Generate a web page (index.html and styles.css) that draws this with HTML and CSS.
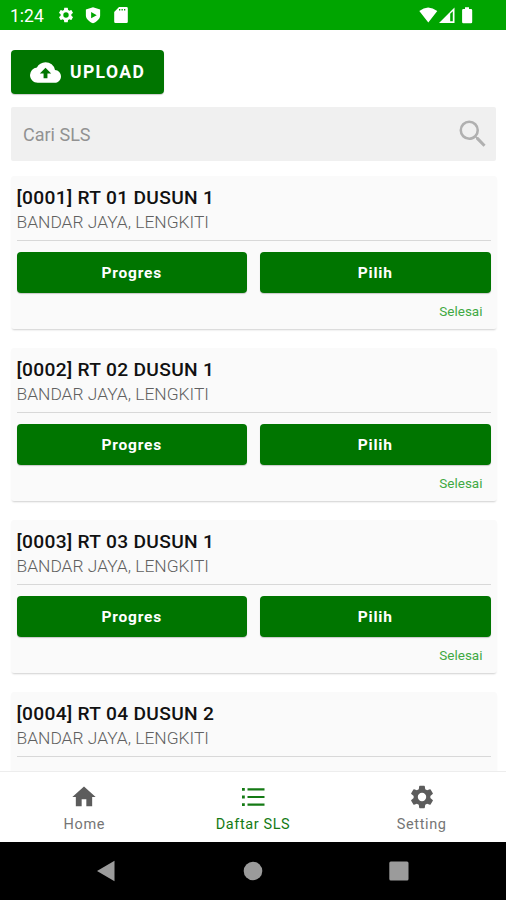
FILE: index.html
```html
<!DOCTYPE html>
<html lang="id">
<head>
<meta charset="utf-8">
<title>Daftar SLS</title>
<link rel="stylesheet" href="styles.css">
</head>
<body>
<svg class="defs" width="0" height="0">
  <symbol id="gear" viewBox="0 0 24 24"><path d="M19.14 12.94c.04-.3.06-.61.06-.94s-.02-.64-.07-.94l2.03-1.58a.49.49 0 0 0 .12-.61l-1.92-3.32a.49.49 0 0 0-.59-.22l-2.39.96a7 7 0 0 0-1.62-.94l-.36-2.54a.48.48 0 0 0-.48-.41h-3.84c-.24 0-.43.17-.47.41l-.36 2.54c-.59.24-1.13.57-1.62.94l-2.39-.96a.48.48 0 0 0-.59.22L2.74 8.87a.47.47 0 0 0 .12.61l2.03 1.58c-.05.3-.09.63-.09.94s.02.64.07.94l-2.03 1.58a.49.49 0 0 0-.12.61l1.92 3.32c.12.22.37.29.59.22l2.39-.96c.5.38 1.03.7 1.62.94l.36 2.54c.05.24.24.41.48.41h3.84c.24 0 .44-.17.47-.41l.36-2.54a7 7 0 0 0 1.62-.94l2.39.96c.22.08.47 0 .59-.22l1.92-3.32a.47.47 0 0 0-.12-.61zM12 15.6a3.6 3.6 0 1 1 0-7.2 3.6 3.6 0 0 1 0 7.2z"/></symbol>
</svg>
<header class="status">
  <span class="clock">1:24</span>
  <svg class="s-gear" width="18" height="18"><use href="#gear"/></svg>
  <svg class="s-shield" width="18" height="18" viewBox="0 0 24 24"><path fill-rule="evenodd" d="M12 1.500 2.500 4.500v8c0 4.600 4.500 8.200 9.500 10.500 5-2.300 9.500-5.900 9.500-10.500v-8zM9.500 8l7.500 4.200-7.500 4.200z"/></svg>
  <svg class="s-card" width="14" height="16" viewBox="0 0 14 16"><path fill-rule="evenodd" d="M5 0h7.500A1.300 1.300 0 0 1 13.800 1.300v13.400a1.300 1.300 0 0 1-1.300 1.300h-11A1.300 1.300 0 0 1 .2 14.700V5zM5 2v1.500h1.300V2zm2.500 0v1.500h1.300V2zM10 2v1.500h1.300V2z"/></svg>
  <svg class="s-signals" width="55" height="17" viewBox="0 0 55 17"><path fill-rule="evenodd" d="M.3 4Q9-3 18.300 4L9.300 15.500zM20 16 35.500.500V16zM31.200 6.800v7.500h2.600V4.200zM46 .300h4v1.700h2q1.200 0 1.200 1.200V15q0 1.200-1.200 1.200h-7.700q-1.200 0-1.200-1.200V3.200Q43.100 2 44.300 2H46z"/></svg>
</header>
<main class="content">
  <button class="upload">
    <svg width="31" height="31" viewBox="0 0 24 24"><path d="M19.350 10.040A7.490 7.490 0 0 0 12 4C9.110 4 6.600 5.640 5.350 8.040A5.994 5.994 0 0 0 0 14c0 3.310 2.690 6 6 6h13c2.760 0 5-2.240 5-5 0-2.640-2.050-4.780-4.650-4.960zM13.500 12.800v3.700h-3v-3.700H7.600L12 8.400l4.400 4.400z" fill-rule="evenodd"/></svg>
    <span>UPLOAD</span>
  </button>
  <div class="search">
    <span>Cari SLS</span>
    <svg width="36" height="36" viewBox="0 0 24 24"><path d="M15.500 14h-.79l-.28-.27A6.471 6.471 0 0 0 16 9.500 6.500 6.500 0 1 0 9.500 16c1.610 0 3.090-.59 4.230-1.570l.27.28v.79l5 4.990L20.400 19.100zM9.500 14.300A4.800 4.800 0 1 1 9.500 4.700a4.800 4.800 0 0 1 0 9.600z"/></svg>
  </div>
  <section class="list">
    <article class="card">
      <h2>[0001] RT 01 DUSUN 1</h2>
      <p>BANDAR JAYA, LENGKITI</p>
      <div class="actions"><button>Progres</button><button>Pilih</button></div>
      <div class="state">Selesai</div>
    </article>
    <article class="card">
      <h2>[0002] RT 02 DUSUN 1</h2>
      <p>BANDAR JAYA, LENGKITI</p>
      <div class="actions"><button>Progres</button><button>Pilih</button></div>
      <div class="state">Selesai</div>
    </article>
    <article class="card">
      <h2>[0003] RT 03 DUSUN 1</h2>
      <p>BANDAR JAYA, LENGKITI</p>
      <div class="actions"><button>Progres</button><button>Pilih</button></div>
      <div class="state">Selesai</div>
    </article>
    <article class="card">
      <h2>[0004] RT 04 DUSUN 2</h2>
      <p>BANDAR JAYA, LENGKITI</p>
    </article>
  </section>
</main>
<nav class="tabs">
  <a class="tab"><svg width="28" height="28" viewBox="0 0 24 24"><path d="M10 20v-6h4v6h5v-8h3L12 3 2 12h3v8z"/></svg><span>Home</span></a>
  <a class="tab active"><svg width="28" height="28" viewBox="0 0 28 28"><path d="M3 5h2.800v2.800H3zM8.500 5.300h17v2.200h-17zM3 12.600h2.800v2.800H3zM8.500 12.900h17v2.200h-17zM3 20.200h2.800V23H3zM8.500 20.500h17v2.200h-17z"/></svg><span>Daftar SLS</span></a>
  <a class="tab"><svg width="28" height="28"><use href="#gear"/></svg><span>Setting</span></a>
</nav>
<footer class="system">
  <svg width="20" height="22" viewBox="0 0 20 22"><path d="M1 11 18.500.800v20.400z"/></svg>
  <svg width="20" height="20" viewBox="0 0 20 20"><circle cx="10" cy="10" r="9.300"/></svg>
  <svg width="20" height="20" viewBox="0 0 20 20"><rect x=".3" y=".5" width="19.200" height="19" rx="1.500"/></svg>
</footer>
</body>
</html>
```
FILE: styles.css
```css
* { box-sizing: border-box; }
body {
  margin: 0;
  height: 900px;
  display: flex;
  flex-direction: column;
  overflow: hidden;
  background: #fff;
  font-family: Roboto, "Liberation Sans", sans-serif;
}
.defs { display: none; }
svg { display: block; fill: currentColor; flex: none; }
h2, p { margin: 0; white-space: nowrap; }
button { border: 0; padding: 0; font-family: inherit; color: #fff; background: #007500; }

.status {
  flex: none;
  height: 30px;
  display: flex;
  align-items: center;
  padding: 0 32px 0 10px;
  color: #fff;
  background: #00a500;
}
.clock { width: 47px; font-size: 17.5px; line-height: 20px; padding-top: 2px; }
.s-gear { margin-right: 9px; }
.s-shield { margin-right: 12px; }
.s-signals { margin-left: auto; }

.content { height: 741px; flex: none; overflow: hidden; padding: 20px 9px 0 11px; }
.upload {
  width: 153px;
  height: 44px;
  display: flex;
  align-items: center;
  gap: 9px;
  padding-left: 19px;
  border-radius: 4px;
  box-shadow: 0 1px 1px #0003;
  font-size: 17.5px;
  font-weight: 700;
  letter-spacing: 1.4px;
}
.search {
  margin: 13px 1px 15px 0;
  height: 54px;
  display: flex;
  align-items: center;
  justify-content: space-between;
  padding: 0 5px 0 12px;
  border-radius: 2px;
  background: #f0f0f0;
  color: #929292;
  font-size: 18px;
}
.search svg { color: #b0b0b0; }
.list { display: grid; gap: 19px; }
.card {
  height: 153px;
  padding: 8px 6.5px 0 5.5px;
  background: #fafafa;
  border-radius: 3px;
  box-shadow: 0 2px 2px -1px #00000030;
}
.card h2 { height: 26px; line-height: 27px; font-size: 19.2px; letter-spacing: .32px; font-weight: 500; color: #111; }
.card p {
  height: 31px;
  line-height: 25px;
  font-size: 17.4px;
  font-weight: 300;
  color: #606060;
  border-bottom: 1px solid #d8d8d8;
}
.actions { display: grid; grid-template-columns: 1fr 1fr; gap: 13px; padding-top: 11px; }
.actions button {
  height: 41px;
  border-radius: 4px;
  box-shadow: 0 1px 1px #0003;
  font-size: 15.5px;
  font-weight: 700;
  letter-spacing: .8px;
}
.state { padding: 9px 8px 0 0; line-height: 18px; text-align: right; font-size: 13.5px; color: #3fa943; }

.tabs {
  flex: none;
  height: 71px;
  display: grid;
  grid-template-columns: repeat(3, 1fr);
  background: #fff;
  border-top: 1px solid #ededed;
}
.tab { display: flex; flex-direction: column; align-items: center; padding-top: 11px; color: #5c5c5c; }
.tab span { font-size: 14.5px; line-height: 18px; margin-top: 5px; letter-spacing: .6px; color: #757575; }
.tab.active, .tab.active span { color: #147a14; }
.system {
  flex: 1;
  display: flex;
  align-items: center;
  justify-content: space-between;
  padding: 0 97px 0 96px;
  color: #9b9b9b;
  background: #000;
}
```
